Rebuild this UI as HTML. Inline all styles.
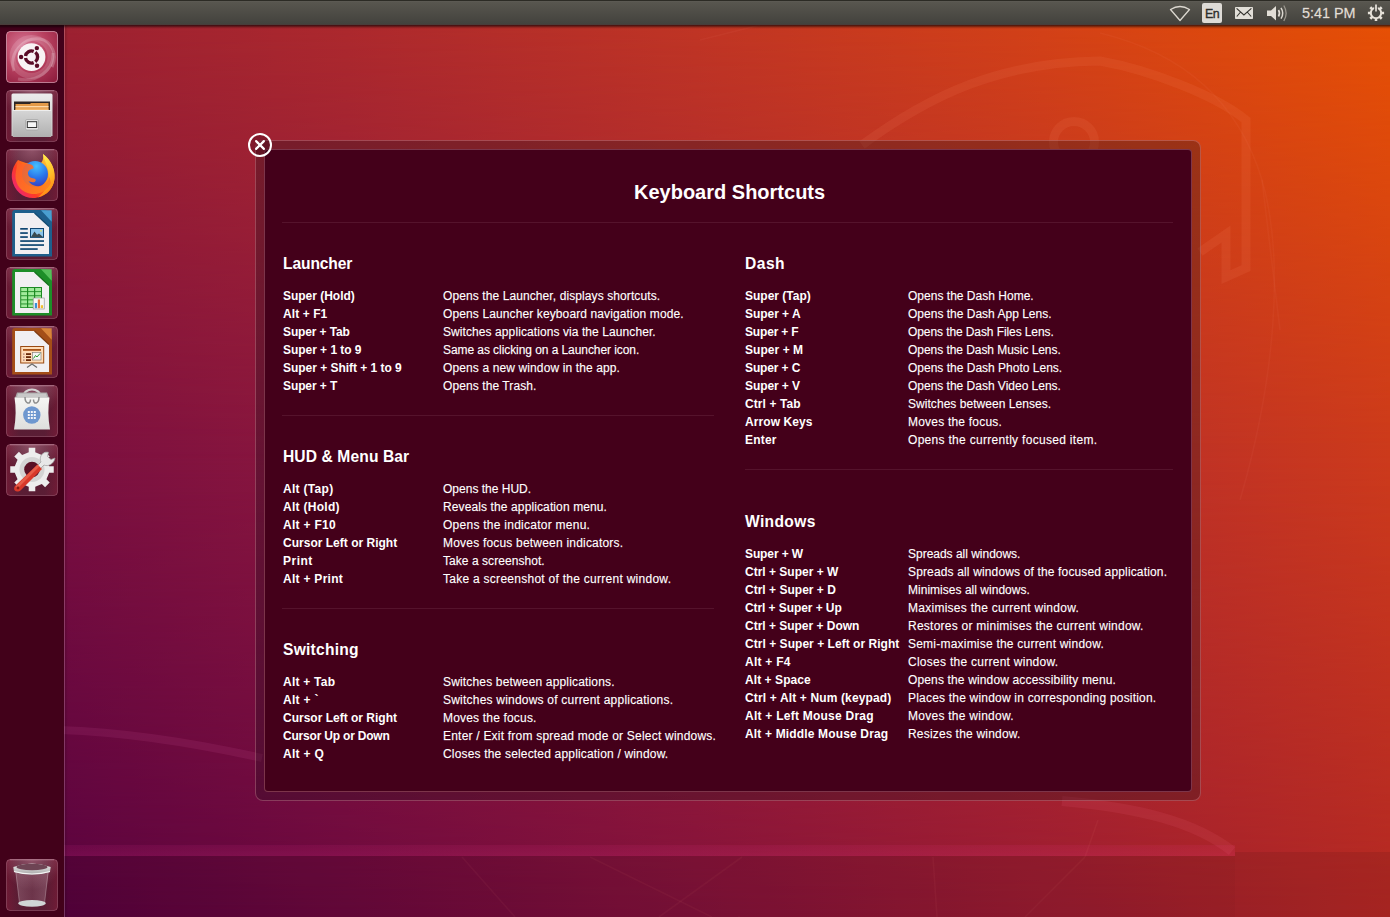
<!DOCTYPE html>
<html><head><meta charset="utf-8"><title>Keyboard Shortcuts</title>
<style>
html,body{margin:0;padding:0;width:1390px;height:917px;overflow:hidden;background:#7a1040}
body{position:relative;font-family:"Liberation Sans",sans-serif}
.abs{position:absolute}
#wpb{position:absolute;left:0;top:0;width:1390px;height:917px;background:linear-gradient(to right,#55013f 0%,#6d093f 25%,#84123b 50%,#9c1c32 75%,#b32824 100%)}
#wpm{position:absolute;left:0;top:0;width:1390px;height:917px;background:linear-gradient(to right,#770e40 0%,#8c173e 25%,#a22137 50%,#b72d2c 75%,#cc3a1c 100%);-webkit-mask-image:linear-gradient(to bottom,#000 50%,rgba(0,0,0,0) 100%);mask-image:linear-gradient(to bottom,#000 50%,rgba(0,0,0,0) 100%)}
#wpt{position:absolute;left:0;top:0;width:1390px;height:917px;background:linear-gradient(to right,#9b2031 0%,#ae2a2c 25%,#c13623 50%,#d44216 75%,#e75103 100%);-webkit-mask-image:linear-gradient(to bottom,#000 0%,rgba(0,0,0,0) 50%);mask-image:linear-gradient(to bottom,#000 0%,rgba(0,0,0,0) 50%)}
#band{position:absolute;left:64px;top:845px;width:1171px;height:11px;background:linear-gradient(to bottom,rgba(255,60,160,0.08),rgba(255,60,160,0.14))}
#below{position:absolute;left:64px;top:856px;width:1171px;height:61px;background:rgba(0,0,0,0.1)}
#below2{position:absolute;left:1235px;top:852px;width:155px;height:65px;background:rgba(0,0,0,0.08)}
#panel{position:absolute;left:0;top:0;width:1390px;height:25px;background:linear-gradient(to bottom,#2c2b25 0,#2c2b25 1px,#5f5d57 1px,#58564f 2px,#43423d 24px,#4a3c3a 24px)}
#pshadow{position:absolute;left:0;top:25px;width:1390px;height:4px;background:linear-gradient(to bottom,rgba(20,5,5,0.75),rgba(0,0,0,0.45) 30%,rgba(0,0,0,0.12) 70%,rgba(0,0,0,0))}
#launcher{position:absolute;left:0;top:25px;width:64px;height:892px;background:#42011a}
#ledge{position:absolute;left:64px;top:25px;width:1px;height:892px;background:rgba(255,255,255,0.2)}
#lshadow{position:absolute;left:65px;top:25px;width:3px;height:892px;background:linear-gradient(to right,rgba(0,0,0,0.15),rgba(0,0,0,0))}
.tile{position:absolute;left:6px;width:52px;height:52px;border-radius:3.5px;overflow:hidden}
.tile svg{position:absolute;left:0;top:0}
#frame{position:absolute;left:255px;top:140px;width:944px;height:659px;border:1px solid rgba(255,175,185,0.3);border-radius:8px;background:rgba(25,15,25,0.3)}
#inner{position:absolute;left:264px;top:149px;width:926px;height:641px;border:1px solid rgba(255,175,185,0.3);border-radius:4px;background:#44001a}
#close{position:absolute;left:248px;top:133px;width:20px;height:20px;border:2px solid #fff;border-radius:50%;background:rgba(40,0,20,0.25)}
.h,.k,.d,.t{position:absolute;white-space:nowrap;color:#fff}
.t{font-size:20px;line-height:20px;font-weight:bold}
.h{font-size:15.6px;line-height:15.6px;font-weight:bold}
.k{font-size:12px;line-height:12px;font-weight:bold}
.d{font-size:12px;line-height:12px;color:#fff;letter-spacing:0.1px;-webkit-text-stroke:0.25px rgba(255,255,255,0.6)}
.sep{position:absolute;height:1px;background:rgba(255,200,220,0.095)}
</style></head><body>
<div id="wpb"></div><div id="wpm"></div><div id="wpt"></div>

<svg class="abs" style="left:0;top:0" width="1390" height="917" viewBox="0 0 1390 917">
<g fill="none" stroke="rgba(255,150,110,0.11)" stroke-width="9" stroke-linejoin="miter">
<path d="M 862 145 C 930 95, 1000 62, 1100 61 C 1150 70, 1215 95, 1246 120 L 1246 268 L 1226 277 L 1226 234 L 1200 252"/>
<circle cx="1074" cy="142" r="20.5"/>
</g>
<g fill="none" stroke="rgba(255,120,200,0.09)" stroke-width="8">
<path d="M 60 730 C 120 732, 190 742, 262 758"/>
</g>
<g fill="none" stroke="rgba(255,120,150,0.1)" stroke-width="10">
<path d="M 1062 801 C 1140 808, 1195 822, 1232 851"/>
</g>
<g fill="none" stroke="rgba(255,160,140,0.06)" stroke-width="1.6">
<path d="M 1100 33 C 1170 50, 1235 90, 1262 180 C 1285 260, 1275 380, 1240 500"/>
<path d="M 1262 180 L 1280 330"/>
<path d="M 700 40 L 760 25"/>
<path d="M 462 857 L 515 917"/>
<path d="M 590 857 L 712 917"/>
<path d="M 740 917 L 738 917"/>
<path d="M 742 857 L 659 917"/>
<path d="M 933 857 L 937 917"/>
<path d="M 1085 857 L 1025 917"/>
<path d="M 1098 820 L 1085 857"/>
</g>
</svg>

<div id="band"></div><div id="below"></div><div id="below2"></div>
<div id="frame"></div>
<div id="inner"></div>
<div class="t" style="left:634px;top:182.07px">Keyboard Shortcuts</div>
<div class="sep" style="left:282px;top:222px;width:891px"></div>
<div class="h" style="left:283px;top:255.79px;letter-spacing:-0.11px">Launcher</div>
<div class="k" style="left:283px;top:289.84px;letter-spacing:-0.018px">Super (Hold)</div>
<div class="d" style="left:443px;top:289.84px;letter-spacing:0.095px">Opens the Launcher, displays shortcuts.</div>
<div class="k" style="left:283px;top:307.84px;letter-spacing:0.086px">Alt + F1</div>
<div class="d" style="left:443px;top:307.84px;letter-spacing:0.115px">Opens Launcher keyboard navigation mode.</div>
<div class="k" style="left:283px;top:325.84px;letter-spacing:-0.12px">Super + Tab</div>
<div class="d" style="left:443px;top:325.84px;letter-spacing:0.084px">Switches applications via the Launcher.</div>
<div class="k" style="left:283px;top:343.84px;letter-spacing:-0.038px">Super + 1 to 9</div>
<div class="d" style="left:443px;top:343.84px;letter-spacing:-0.071px">Same as clicking on a Launcher icon.</div>
<div class="k" style="left:283px;top:361.84px;letter-spacing:-0.029px">Super + Shift + 1 to 9</div>
<div class="d" style="left:443px;top:361.84px;letter-spacing:0.121px">Opens a new window in the app.</div>
<div class="k" style="left:283px;top:379.84px;letter-spacing:-0.1px">Super + T</div>
<div class="d" style="left:443px;top:379.84px;letter-spacing:0.086px">Opens the Trash.</div>
<div class="sep" style="left:282px;top:415px;width:432px"></div>
<div class="h" style="left:283px;top:448.79px;letter-spacing:0.11px">HUD &amp; Menu Bar</div>
<div class="k" style="left:283px;top:482.84px;letter-spacing:0.3px">Alt (Tap)</div>
<div class="d" style="left:443px;top:482.84px;letter-spacing:0.007px">Opens the HUD.</div>
<div class="k" style="left:283px;top:500.84px;letter-spacing:0.289px">Alt (Hold)</div>
<div class="d" style="left:443px;top:500.84px;letter-spacing:0.114px">Reveals the application menu.</div>
<div class="k" style="left:283px;top:518.84px;letter-spacing:0.3px">Alt + F10</div>
<div class="d" style="left:443px;top:518.84px;letter-spacing:0.258px">Opens the indicator menu.</div>
<div class="k" style="left:283px;top:536.84px;letter-spacing:0.011px">Cursor Left or Right</div>
<div class="d" style="left:443px;top:536.84px;letter-spacing:0.2px">Moves focus between indicators.</div>
<div class="k" style="left:283px;top:554.84px;letter-spacing:0.5px">Print</div>
<div class="d" style="left:443px;top:554.84px;letter-spacing:0.053px">Take a screenshot.</div>
<div class="k" style="left:283px;top:572.84px;letter-spacing:0.28px">Alt + Print</div>
<div class="d" style="left:443px;top:572.84px;letter-spacing:0.27px">Take a screenshot of the current window.</div>
<div class="sep" style="left:282px;top:608px;width:432px"></div>
<div class="h" style="left:283px;top:641.79px;letter-spacing:0.24px">Switching</div>
<div class="k" style="left:283px;top:675.84px;letter-spacing:0.237px">Alt + Tab</div>
<div class="d" style="left:443px;top:675.84px;letter-spacing:0.163px">Switches between applications.</div>
<div class="k" style="left:283px;top:693.84px;letter-spacing:0.3px">Alt + `</div>
<div class="d" style="left:443px;top:693.84px;letter-spacing:0.214px">Switches windows of current applications.</div>
<div class="k" style="left:283px;top:711.84px;letter-spacing:0.0px">Cursor Left or Right</div>
<div class="d" style="left:443px;top:711.84px;letter-spacing:0.18px">Moves the focus.</div>
<div class="k" style="left:283px;top:729.84px;letter-spacing:-0.2px">Cursor Up or Down</div>
<div class="d" style="left:443px;top:729.84px;letter-spacing:0.215px">Enter / Exit from spread mode or Select windows.</div>
<div class="k" style="left:283px;top:747.84px;letter-spacing:0.3px">Alt + Q</div>
<div class="d" style="left:443px;top:747.84px;letter-spacing:0.176px">Closes the selected application / window.</div>
<div class="h" style="left:745px;top:255.79px;letter-spacing:0.5px">Dash</div>
<div class="k" style="left:745px;top:289.84px;letter-spacing:0.0px">Super (Tap)</div>
<div class="d" style="left:908px;top:289.84px;letter-spacing:0.016px">Opens the Dash Home.</div>
<div class="k" style="left:745px;top:307.84px;letter-spacing:-0.037px">Super + A</div>
<div class="d" style="left:908px;top:307.84px;letter-spacing:0.005px">Opens the Dash App Lens.</div>
<div class="k" style="left:745px;top:325.84px;letter-spacing:-0.175px">Super + F</div>
<div class="d" style="left:908px;top:325.84px;letter-spacing:-0.092px">Opens the Dash Files Lens.</div>
<div class="k" style="left:745px;top:343.84px;letter-spacing:0.05px">Super + M</div>
<div class="d" style="left:908px;top:343.84px;letter-spacing:-0.052px">Opens the Dash Music Lens.</div>
<div class="k" style="left:745px;top:361.84px;letter-spacing:-0.125px">Super + C</div>
<div class="d" style="left:908px;top:361.84px;letter-spacing:0.004px">Opens the Dash Photo Lens.</div>
<div class="k" style="left:745px;top:379.84px;letter-spacing:-0.088px">Super + V</div>
<div class="d" style="left:908px;top:379.84px;letter-spacing:-0.012px">Opens the Dash Video Lens.</div>
<div class="k" style="left:745px;top:397.84px;letter-spacing:0.078px">Ctrl + Tab</div>
<div class="d" style="left:908px;top:397.84px;letter-spacing:0.048px">Switches between Lenses.</div>
<div class="k" style="left:745px;top:415.84px;letter-spacing:0.078px">Arrow Keys</div>
<div class="d" style="left:908px;top:415.84px;letter-spacing:0.206px">Moves the focus.</div>
<div class="k" style="left:745px;top:433.84px;letter-spacing:0.2px">Enter</div>
<div class="d" style="left:908px;top:433.84px;letter-spacing:0.3px">Opens the currently focused item.</div>
<div class="sep" style="left:745px;top:469px;width:428px"></div>
<div class="h" style="left:745px;top:513.79px;letter-spacing:0.35px">Windows</div>
<div class="k" style="left:745px;top:547.84px;letter-spacing:-0.112px">Super + W</div>
<div class="d" style="left:908px;top:547.84px;letter-spacing:-0.016px">Spreads all windows.</div>
<div class="k" style="left:745px;top:565.84px;letter-spacing:0.0px">Ctrl + Super + W</div>
<div class="d" style="left:908px;top:565.84px;letter-spacing:0.148px">Spreads all windows of the focused application.</div>
<div class="k" style="left:745px;top:583.84px;letter-spacing:0.013px">Ctrl + Super + D</div>
<div class="d" style="left:908px;top:583.84px;letter-spacing:0.024px">Minimises all windows.</div>
<div class="k" style="left:745px;top:601.84px;letter-spacing:-0.081px">Ctrl + Super + Up</div>
<div class="d" style="left:908px;top:601.84px;letter-spacing:0.264px">Maximises the current window.</div>
<div class="k" style="left:745px;top:619.84px;letter-spacing:-0.017px">Ctrl + Super + Down</div>
<div class="d" style="left:908px;top:619.84px;letter-spacing:0.25px">Restores or minimises the current window.</div>
<div class="k" style="left:745px;top:637.84px;letter-spacing:0.037px">Ctrl + Super + Left or Right</div>
<div class="d" style="left:908px;top:637.84px;letter-spacing:0.219px">Semi-maximise the current window.</div>
<div class="k" style="left:745px;top:655.84px;letter-spacing:0.243px">Alt + F4</div>
<div class="d" style="left:908px;top:655.84px;letter-spacing:0.268px">Closes the current window.</div>
<div class="k" style="left:745px;top:673.84px;letter-spacing:0.07px">Alt + Space</div>
<div class="d" style="left:908px;top:673.84px;letter-spacing:0.146px">Opens the window accessibility menu.</div>
<div class="k" style="left:745px;top:691.84px;letter-spacing:0.142px">Ctrl + Alt + Num (keypad)</div>
<div class="d" style="left:908px;top:691.84px;letter-spacing:0.203px">Places the window in corresponding position.</div>
<div class="k" style="left:745px;top:709.84px;letter-spacing:0.245px">Alt + Left Mouse Drag</div>
<div class="d" style="left:908px;top:709.84px;letter-spacing:0.262px">Moves the window.</div>
<div class="k" style="left:745px;top:727.84px;letter-spacing:0.159px">Alt + Middle Mouse Drag</div>
<div class="d" style="left:908px;top:727.84px;letter-spacing:0.2px">Resizes the window.</div>
<div id="close"><svg width="20" height="20" viewBox="0 0 20 20" style="position:absolute;left:0;top:0"><path d="M6.1 6.1 L13.9 13.9 M13.9 6.1 L6.1 13.9" stroke="#fff" stroke-width="2.2" stroke-linecap="round"/></svg></div>
<div id="launcher"></div><div id="ledge"></div><div id="lshadow"></div>
<div class="tile" style="top:31px"><svg width="52" height="52" viewBox="0 0 52 52"><defs><radialGradient id="pk" cx="0.35" cy="0.3" r="0.9"><stop offset="0" stop-color="#d77a98"/><stop offset="0.5" stop-color="#b8405f"/><stop offset="1" stop-color="#8e1d3e"/></radialGradient></defs><rect x="0.5" y="0.5" width="51" height="51" rx="3.5" fill="url(#pk)" stroke="rgba(255,210,225,0.55)"/><path d="M8 40 C 2 22, 18 6, 34 8 C 46 10, 52 24, 46 36" fill="none" stroke="rgba(255,255,255,0.22)" stroke-width="3"/><path d="M12 48 C 30 52, 48 40, 47 22" fill="none" stroke="rgba(255,255,255,0.18)" stroke-width="3"/>
<circle cx="25.5" cy="26" r="19" fill="none" stroke="rgba(255,235,240,0.16)" stroke-width="6"/>
<circle cx="25.5" cy="26.1" r="13.9" fill="#f8f2f4"/>
<path d="M27.69 31.69 A6.1 6.1 0 0 1 19.48 26.95 M19.48 25.05 A6.1 6.1 0 0 1 27.69 20.31 M29.34 21.26 A6.1 6.1 0 0 1 29.34 30.74" fill="none" stroke="#5a0b26" stroke-width="3.4"/>
<circle cx="30.86" cy="17.09" r="2.75" fill="#f8f2f4"/><circle cx="30.86" cy="17.09" r="2.2" fill="#5a0b26"/><circle cx="15.10" cy="26.00" r="2.75" fill="#f8f2f4"/><circle cx="15.10" cy="26.00" r="2.2" fill="#5a0b26"/><circle cx="31.01" cy="34.82" r="2.75" fill="#f8f2f4"/><circle cx="31.01" cy="34.82" r="2.2" fill="#5a0b26"/>
</svg></div>
<div class="tile" style="top:90px"><svg width="52" height="52" viewBox="0 0 52 52"><defs><linearGradient id="tb1" x1="0" y1="0" x2="0" y2="1"><stop offset="0" stop-color="rgba(255,220,230,0.16)"/><stop offset="0.3" stop-color="rgba(255,255,255,0.10)"/><stop offset="1" stop-color="rgba(255,220,235,0.13)"/></linearGradient><radialGradient id="tbr1" cx="0.5" cy="0" r="0.6"><stop offset="0" stop-color="rgba(255,190,210,0.3)"/><stop offset="1" stop-color="rgba(255,190,210,0)"/></radialGradient><linearGradient id="tbs1" x1="0" y1="0" x2="1" y2="0"><stop offset="0" stop-color="rgba(190,20,60,0.22)"/><stop offset="0.25" stop-color="rgba(190,20,60,0)"/><stop offset="0.75" stop-color="rgba(190,20,60,0)"/><stop offset="1" stop-color="rgba(190,20,60,0.22)"/></linearGradient></defs><rect x="0.5" y="0.5" width="51" height="51" rx="3.5" fill="url(#tb1)"/><rect x="0.5" y="0.5" width="51" height="51" rx="3.5" fill="url(#tbs1)"/><rect x="0.5" y="0.5" width="51" height="51" rx="3.5" fill="url(#tbr1)" stroke="rgba(255,205,220,0.24)"/><path d="M4 0.8 H48" stroke="rgba(255,210,225,0.35)" stroke-width="1"/>
<defs><linearGradient id="fg1" x1="0" y1="0" x2="0" y2="1"><stop offset="0" stop-color="#ececec"/><stop offset="1" stop-color="#c4c4c4"/></linearGradient>
<linearGradient id="fg2" x1="0" y1="0" x2="0" y2="1"><stop offset="0" stop-color="#d6d6d6"/><stop offset="1" stop-color="#b0b0b0"/></linearGradient></defs>
<path d="M7 3.5 H45 Q46.5 3.5 46.5 5 V46 H5.5 V5 Q5.5 3.5 7 3.5 Z" fill="url(#fg1)"/>
<rect x="8" y="11.5" width="36" height="9" fill="#2e2624"/>
<path d="M9.5 14 H24 L25 13 H42.5 V20 H9.5 Z" fill="#e39a48"/>
<rect x="9.5" y="16" width="33" height="1.3" fill="#ffd9a8"/>
<rect x="9.5" y="18.5" width="33" height="1.5" fill="#f2b46a"/>
<rect x="6.8" y="20" width="38.4" height="27" fill="url(#fg2)"/>
<rect x="6.8" y="20" width="38.4" height="1" fill="#eeeeee"/>
<rect x="19.5" y="29.5" width="13" height="10.5" rx="1.5" fill="#e2e2e2" stroke="#a0a0a0" stroke-width="0.7"/>
<rect x="21.3" y="31.7" width="9.4" height="5.8" fill="#f6f6f6" stroke="#333" stroke-width="1"/>
</svg></div>
<div class="tile" style="top:149px"><svg width="52" height="52" viewBox="0 0 52 52"><defs><linearGradient id="tb2" x1="0" y1="0" x2="0" y2="1"><stop offset="0" stop-color="rgba(255,220,230,0.16)"/><stop offset="0.3" stop-color="rgba(255,255,255,0.10)"/><stop offset="1" stop-color="rgba(255,220,235,0.13)"/></linearGradient><radialGradient id="tbr2" cx="0.5" cy="0" r="0.6"><stop offset="0" stop-color="rgba(255,190,210,0.3)"/><stop offset="1" stop-color="rgba(255,190,210,0)"/></radialGradient><linearGradient id="tbs2" x1="0" y1="0" x2="1" y2="0"><stop offset="0" stop-color="rgba(190,20,60,0.22)"/><stop offset="0.25" stop-color="rgba(190,20,60,0)"/><stop offset="0.75" stop-color="rgba(190,20,60,0)"/><stop offset="1" stop-color="rgba(190,20,60,0.22)"/></linearGradient></defs><rect x="0.5" y="0.5" width="51" height="51" rx="3.5" fill="url(#tb2)"/><rect x="0.5" y="0.5" width="51" height="51" rx="3.5" fill="url(#tbs2)"/><rect x="0.5" y="0.5" width="51" height="51" rx="3.5" fill="url(#tbr2)" stroke="rgba(255,205,220,0.24)"/><path d="M4 0.8 H48" stroke="rgba(255,210,225,0.35)" stroke-width="1"/>
<defs>
<radialGradient id="ffb" cx="0.55" cy="0.2" r="0.9"><stop offset="0" stop-color="#45c0ff"/><stop offset="0.5" stop-color="#2a74ea"/><stop offset="1" stop-color="#3b2fb4"/></radialGradient>
<linearGradient id="ffo" x1="0.1" y1="0.8" x2="0.9" y2="0.2"><stop offset="0" stop-color="#f0286a"/><stop offset="0.28" stop-color="#ff3b24"/><stop offset="0.6" stop-color="#ff8612"/><stop offset="1" stop-color="#ffc73a"/></linearGradient>
<linearGradient id="fft" x1="0" y1="0" x2="0.3" y2="1"><stop offset="0" stop-color="#fff75c"/><stop offset="0.6" stop-color="#ffc02a"/><stop offset="1" stop-color="#ff8a14"/></linearGradient>
<linearGradient id="ffh" x1="0" y1="0" x2="1" y2="1"><stop offset="0" stop-color="#ff5a2a"/><stop offset="1" stop-color="#ff8a1c"/></linearGradient>
</defs>
<path d="M12 11 C 7 17, 5 24, 6 30 C 8 42, 17 49, 27 49 C 39 49, 48 40, 48.5 29 C 49 19, 44 10, 37 5 C 37.5 9, 37 12, 35 14 L 20 14 C 17 13, 14 12, 12 11 Z" fill="url(#ffo)"/>
<circle cx="29" cy="25" r="13" fill="url(#ffb)"/>
<path d="M37 5 C 45 11, 49.5 20, 48.5 29.5 C 47.5 39, 41 46, 32 48.5 C 39 43, 43.5 35, 43 26 C 42.5 17, 38 12, 37 5 Z" fill="url(#fft)"/>
<path d="M12 11 L 14.5 15.5 C 17 14, 21 14, 25 15.5 C 27 16.5, 28 18, 27.5 19.5 C 24 20, 21.5 22, 22 25 C 22.5 28, 25 29, 28 29.5 C 30 30, 30.5 32, 28.5 33 C 26 33.5, 24 33, 22.5 32 C 25 36, 31 38.5, 36 37 C 40 35.5, 42.5 32, 43.5 28 L 45 34 C 41 42, 34 45.5, 26 45 C 16 44, 9 36, 9.5 26 C 10 20, 11.5 16, 12 11 Z" fill="url(#ffh)" opacity="0.9"/>
</svg></div>
<div class="tile" style="top:208px"><svg width="52" height="52" viewBox="0 0 52 52"><defs><linearGradient id="tb3" x1="0" y1="0" x2="0" y2="1"><stop offset="0" stop-color="rgba(255,220,230,0.16)"/><stop offset="0.3" stop-color="rgba(255,255,255,0.10)"/><stop offset="1" stop-color="rgba(255,220,235,0.13)"/></linearGradient><radialGradient id="tbr3" cx="0.5" cy="0" r="0.6"><stop offset="0" stop-color="rgba(255,190,210,0.3)"/><stop offset="1" stop-color="rgba(255,190,210,0)"/></radialGradient><linearGradient id="tbs3" x1="0" y1="0" x2="1" y2="0"><stop offset="0" stop-color="rgba(190,20,60,0.22)"/><stop offset="0.25" stop-color="rgba(190,20,60,0)"/><stop offset="0.75" stop-color="rgba(190,20,60,0)"/><stop offset="1" stop-color="rgba(190,20,60,0.22)"/></linearGradient></defs><rect x="0.5" y="0.5" width="51" height="51" rx="3.5" fill="url(#tb3)"/><rect x="0.5" y="0.5" width="51" height="51" rx="3.5" fill="url(#tbs3)"/><rect x="0.5" y="0.5" width="51" height="51" rx="3.5" fill="url(#tbr3)" stroke="rgba(255,205,220,0.24)"/><path d="M4 0.8 H48" stroke="rgba(255,210,225,0.35)" stroke-width="1"/><defs><linearGradient id="docg" x1="0" y1="0" x2="0" y2="1"><stop offset="0" stop-color="rgba(255,255,255,0.3)"/><stop offset="1" stop-color="rgba(200,200,210,0.25)"/></linearGradient></defs>
<path d="M9 2 H40 L46 8 V48.5 H6.2 V5 Q6.2 2 9 2 Z" fill="#1e5f8c"/>
<path d="M35 2.3 H45.7 V13.8 Z" fill="#4a9fd0"/>
<path d="M9 5 H28.5 L43 18.5 V46 H9 Z" fill="#f1eff2"/>
<path d="M28.5 5 L43 18.5" stroke="#134a70" stroke-width="1.2"/>

<rect x="14.2" y="20" width="7.6" height="1.7" fill="#0f4672"/>
<rect x="14.2" y="24.2" width="7.6" height="1.7" fill="#0f4672"/>
<rect x="14.2" y="28.2" width="7.6" height="1.7" fill="#0f4672"/>
<rect x="14.2" y="32.2" width="23.8" height="1.7" fill="#0f4672"/>
<rect x="14.2" y="36.2" width="23.8" height="1.7" fill="#0f4672"/>
<rect x="14.2" y="40.2" width="17.5" height="1.7" fill="#0f4672"/>
<rect x="24" y="20" width="14" height="9.9" fill="#0f4672"/>
<rect x="25" y="21" width="12" height="7.9" fill="#8cc4ea"/>
<path d="M25 28.9 L28.5 23.5 L31 26.8 L33 25.5 L37 28.9 Z" fill="#3a4a50"/>
<circle cx="35" cy="22.8" r="0.9" fill="#e8e060"/>
</svg></div>
<div class="tile" style="top:267px"><svg width="52" height="52" viewBox="0 0 52 52"><defs><linearGradient id="tb4" x1="0" y1="0" x2="0" y2="1"><stop offset="0" stop-color="rgba(255,220,230,0.16)"/><stop offset="0.3" stop-color="rgba(255,255,255,0.10)"/><stop offset="1" stop-color="rgba(255,220,235,0.13)"/></linearGradient><radialGradient id="tbr4" cx="0.5" cy="0" r="0.6"><stop offset="0" stop-color="rgba(255,190,210,0.3)"/><stop offset="1" stop-color="rgba(255,190,210,0)"/></radialGradient><linearGradient id="tbs4" x1="0" y1="0" x2="1" y2="0"><stop offset="0" stop-color="rgba(190,20,60,0.22)"/><stop offset="0.25" stop-color="rgba(190,20,60,0)"/><stop offset="0.75" stop-color="rgba(190,20,60,0)"/><stop offset="1" stop-color="rgba(190,20,60,0.22)"/></linearGradient></defs><rect x="0.5" y="0.5" width="51" height="51" rx="3.5" fill="url(#tb4)"/><rect x="0.5" y="0.5" width="51" height="51" rx="3.5" fill="url(#tbs4)"/><rect x="0.5" y="0.5" width="51" height="51" rx="3.5" fill="url(#tbr4)" stroke="rgba(255,205,220,0.24)"/><path d="M4 0.8 H48" stroke="rgba(255,210,225,0.35)" stroke-width="1"/><defs><linearGradient id="docg" x1="0" y1="0" x2="0" y2="1"><stop offset="0" stop-color="rgba(255,255,255,0.3)"/><stop offset="1" stop-color="rgba(200,200,210,0.25)"/></linearGradient></defs>
<path d="M9 2 H40 L46 8 V48.5 H6.2 V5 Q6.2 2 9 2 Z" fill="#1d8e28"/>
<path d="M35 2.3 H45.7 V13.8 Z" fill="#56bf5a"/>
<path d="M9 5 H28.5 L43 18.5 V46 H9 Z" fill="#f1eff2"/>
<path d="M28.5 5 L43 18.5" stroke="#14701c" stroke-width="1.2"/>

<rect x="14.2" y="20" width="21.8" height="21" fill="#1b8a22"/>
<g fill="#a2ea9c">
<rect x="15.2" y="21" width="5.8" height="3.2"/><rect x="22.2" y="21" width="5.8" height="3.2"/><rect x="29.2" y="21" width="5.8" height="3.2"/>
<rect x="15.2" y="25.1" width="5.8" height="3.2"/><rect x="22.2" y="25.1" width="5.8" height="3.2"/><rect x="29.2" y="25.1" width="5.8" height="3.2"/>
<rect x="15.2" y="29.2" width="5.8" height="3.2"/><rect x="22.2" y="29.2" width="5.8" height="3.2"/><rect x="29.2" y="29.2" width="5.8" height="3.2"/>
<rect x="15.2" y="33.3" width="5.8" height="3.2"/><rect x="22.2" y="33.3" width="5.8" height="3.2"/>
<rect x="15.2" y="37.4" width="5.8" height="2.8"/><rect x="22.2" y="37.4" width="5.8" height="2.8"/>
</g>
<rect x="27.2" y="31" width="11" height="11" fill="#f6f6f6" stroke="#8a8a8a" stroke-width="0.6"/>
<rect x="28.8" y="36" width="2.2" height="5.2" fill="#3a8fd8"/>
<rect x="31.8" y="32.5" width="2.2" height="8.7" fill="#e8783a"/>
<rect x="34.8" y="38.2" width="2.2" height="3" fill="#f0c030"/>
</svg></div>
<div class="tile" style="top:326px"><svg width="52" height="52" viewBox="0 0 52 52"><defs><linearGradient id="tb5" x1="0" y1="0" x2="0" y2="1"><stop offset="0" stop-color="rgba(255,220,230,0.16)"/><stop offset="0.3" stop-color="rgba(255,255,255,0.10)"/><stop offset="1" stop-color="rgba(255,220,235,0.13)"/></linearGradient><radialGradient id="tbr5" cx="0.5" cy="0" r="0.6"><stop offset="0" stop-color="rgba(255,190,210,0.3)"/><stop offset="1" stop-color="rgba(255,190,210,0)"/></radialGradient><linearGradient id="tbs5" x1="0" y1="0" x2="1" y2="0"><stop offset="0" stop-color="rgba(190,20,60,0.22)"/><stop offset="0.25" stop-color="rgba(190,20,60,0)"/><stop offset="0.75" stop-color="rgba(190,20,60,0)"/><stop offset="1" stop-color="rgba(190,20,60,0.22)"/></linearGradient></defs><rect x="0.5" y="0.5" width="51" height="51" rx="3.5" fill="url(#tb5)"/><rect x="0.5" y="0.5" width="51" height="51" rx="3.5" fill="url(#tbs5)"/><rect x="0.5" y="0.5" width="51" height="51" rx="3.5" fill="url(#tbr5)" stroke="rgba(255,205,220,0.24)"/><path d="M4 0.8 H48" stroke="rgba(255,210,225,0.35)" stroke-width="1"/><defs><linearGradient id="docg" x1="0" y1="0" x2="0" y2="1"><stop offset="0" stop-color="rgba(255,255,255,0.3)"/><stop offset="1" stop-color="rgba(200,200,210,0.25)"/></linearGradient></defs>
<path d="M9 2 H40 L46 8 V48.5 H6.2 V5 Q6.2 2 9 2 Z" fill="#a44e18"/>
<path d="M35 2.3 H45.7 V13.8 Z" fill="#d8843a"/>
<path d="M9 5 H28.5 L43 18.5 V46 H9 Z" fill="#f1eff2"/>
<path d="M28.5 5 L43 18.5" stroke="#7e3a10" stroke-width="1.2"/>

<rect x="14.2" y="20" width="24" height="17.5" fill="#9a4a12"/>
<rect x="15.2" y="21" width="22" height="15.5" fill="#ffdcb8"/>
<rect x="17" y="23" width="18" height="1.8" fill="#a85418"/>
<rect x="17" y="27.4" width="1.6" height="1.4" fill="#b08a80"/><rect x="17" y="30.4" width="1.6" height="1.4" fill="#b08a80"/><rect x="17" y="33.4" width="1.6" height="1.4" fill="#b08a80"/>
<rect x="20" y="27.2" width="5" height="1.8" fill="#6a2a08"/><rect x="20" y="30.2" width="5" height="1.8" fill="#6a2a08"/><rect x="20" y="33.2" width="5" height="1.8" fill="#6a2a08"/>
<rect x="26.5" y="26.5" width="8.5" height="7.5" fill="#f4f4f4" stroke="#777" stroke-width="0.6"/>
<path d="M27.5 32.5 L29.5 29.5 L31 31 L34 27.5" fill="none" stroke="#2a9a2a" stroke-width="1"/>
<path d="M21 41.5 L26 38 L31 41.5" fill="none" stroke="#6a6a6a" stroke-width="1.2"/>
</svg></div>
<div class="tile" style="top:385px"><svg width="52" height="52" viewBox="0 0 52 52"><defs><linearGradient id="tb6" x1="0" y1="0" x2="0" y2="1"><stop offset="0" stop-color="rgba(255,220,230,0.16)"/><stop offset="0.3" stop-color="rgba(255,255,255,0.10)"/><stop offset="1" stop-color="rgba(255,220,235,0.13)"/></linearGradient><radialGradient id="tbr6" cx="0.5" cy="0" r="0.6"><stop offset="0" stop-color="rgba(255,190,210,0.3)"/><stop offset="1" stop-color="rgba(255,190,210,0)"/></radialGradient><linearGradient id="tbs6" x1="0" y1="0" x2="1" y2="0"><stop offset="0" stop-color="rgba(190,20,60,0.22)"/><stop offset="0.25" stop-color="rgba(190,20,60,0)"/><stop offset="0.75" stop-color="rgba(190,20,60,0)"/><stop offset="1" stop-color="rgba(190,20,60,0.22)"/></linearGradient></defs><rect x="0.5" y="0.5" width="51" height="51" rx="3.5" fill="url(#tb6)"/><rect x="0.5" y="0.5" width="51" height="51" rx="3.5" fill="url(#tbs6)"/><rect x="0.5" y="0.5" width="51" height="51" rx="3.5" fill="url(#tbr6)" stroke="rgba(255,205,220,0.24)"/><path d="M4 0.8 H48" stroke="rgba(255,210,225,0.35)" stroke-width="1"/>
<defs><linearGradient id="bagg" x1="0" y1="0" x2="0" y2="1"><stop offset="0" stop-color="#f6f6f4"/><stop offset="1" stop-color="#dededc"/></linearGradient></defs>
<path d="M17.5 12 C 17.5 2, 34.5 2, 34.5 12" fill="none" stroke="#d4d4d4" stroke-width="2.2"/>
<path d="M11 7.5 H41 L43 13 H9 Z" fill="#a8a8a8"/>
<path d="M12 8.5 H40 L41 12 H11 Z" fill="#c8c8c8"/>
<path d="M8.5 12.5 H43.5 Q 41 28, 44 44.5 H8 Q 11 28, 8.5 12.5 Z" fill="url(#bagg)"/>
<path d="M19 12 C 19 19, 24.5 20, 24.5 14.5 M27.5 14.5 C 27.5 20, 33 19, 33 12" fill="none" stroke="#8e8e8e" stroke-width="1.5"/>
<circle cx="25.8" cy="30" r="8.7" fill="#6e97cf"/>
<g fill="#f4f6fa">
<rect x="21.8" y="26" width="2" height="2"/><rect x="24.8" y="26" width="2" height="2"/><rect x="27.8" y="26" width="2" height="2"/>
<rect x="21.8" y="29" width="2" height="2"/><rect x="24.8" y="29" width="2" height="2"/><rect x="27.8" y="29" width="2" height="2"/>
<rect x="21.8" y="32" width="2" height="2"/><rect x="24.8" y="32" width="2" height="2"/><rect x="27.8" y="32" width="2" height="2"/>
</g>
</svg></div>
<div class="tile" style="top:444px"><svg width="52" height="52" viewBox="0 0 52 52"><defs><linearGradient id="tb7" x1="0" y1="0" x2="0" y2="1"><stop offset="0" stop-color="rgba(255,220,230,0.16)"/><stop offset="0.3" stop-color="rgba(255,255,255,0.10)"/><stop offset="1" stop-color="rgba(255,220,235,0.13)"/></linearGradient><radialGradient id="tbr7" cx="0.5" cy="0" r="0.6"><stop offset="0" stop-color="rgba(255,190,210,0.3)"/><stop offset="1" stop-color="rgba(255,190,210,0)"/></radialGradient><linearGradient id="tbs7" x1="0" y1="0" x2="1" y2="0"><stop offset="0" stop-color="rgba(190,20,60,0.22)"/><stop offset="0.25" stop-color="rgba(190,20,60,0)"/><stop offset="0.75" stop-color="rgba(190,20,60,0)"/><stop offset="1" stop-color="rgba(190,20,60,0.22)"/></linearGradient></defs><rect x="0.5" y="0.5" width="51" height="51" rx="3.5" fill="url(#tb7)"/><rect x="0.5" y="0.5" width="51" height="51" rx="3.5" fill="url(#tbs7)"/><rect x="0.5" y="0.5" width="51" height="51" rx="3.5" fill="url(#tbr7)" stroke="rgba(255,205,220,0.24)"/><path d="M4 0.8 H48" stroke="rgba(255,210,225,0.35)" stroke-width="1"/>
<path d="M43.19 22.24 L47.75 22.21 L47.75 28.79 L43.19 28.76 L40.46 35.35 L43.71 38.56 L39.06 43.21 L35.85 39.96 L29.26 42.69 L29.29 47.25 L22.71 47.25 L22.74 42.69 L16.15 39.96 L12.94 43.21 L8.29 38.56 L11.54 35.35 L8.81 28.76 L4.25 28.79 L4.25 22.21 L8.81 22.24 L11.54 15.65 L8.29 12.44 L12.94 7.79 L16.15 11.04 L22.74 8.31 L22.71 3.75 L29.29 3.75 L29.26 8.31 L35.85 11.04 L39.06 7.79 L43.71 12.44 L40.46 15.65 Z" fill="#ededed"/>
<circle cx="26" cy="25.5" r="12.5" fill="#d4d4d4"/>
<circle cx="26" cy="25.5" r="7.8" fill="#5a1025"/>
<path d="M41 8 C 35 8.5, 33 14, 35 18 L 31 22 L 34 25 L 38 21 C 42 23, 48 20, 49 14 L 45 15.5 L 41.5 12.5 L 42.5 8.3 Z" fill="#e8e8e8" stroke="#9a9a9a" stroke-width="0.7"/>
<path d="M31.5 20.5 L 36 25 L 15 46 C 13 48, 10 48, 8.8 46.6 C 7.5 45, 8 42.5, 10 41 Z" fill="#d8382a"/>
<path d="M31.5 20.5 L 33.5 22.5 L 11.5 44.5 L 9.5 42.5 Z" fill="#f47a60" opacity="0.55"/>
<circle cx="12" cy="44" r="1.4" fill="#8a1a12"/>
</svg></div>
<div class="tile" style="top:859px"><svg width="52" height="52" viewBox="0 0 52 52"><defs><linearGradient id="tbt" x1="0" y1="0" x2="0" y2="1"><stop offset="0" stop-color="rgba(255,220,230,0.16)"/><stop offset="0.3" stop-color="rgba(255,255,255,0.10)"/><stop offset="1" stop-color="rgba(255,220,235,0.13)"/></linearGradient><radialGradient id="tbrt" cx="0.5" cy="0" r="0.6"><stop offset="0" stop-color="rgba(255,190,210,0.3)"/><stop offset="1" stop-color="rgba(255,190,210,0)"/></radialGradient><linearGradient id="tbst" x1="0" y1="0" x2="1" y2="0"><stop offset="0" stop-color="rgba(190,20,60,0.22)"/><stop offset="0.25" stop-color="rgba(190,20,60,0)"/><stop offset="0.75" stop-color="rgba(190,20,60,0)"/><stop offset="1" stop-color="rgba(190,20,60,0.22)"/></linearGradient></defs><rect x="0.5" y="0.5" width="51" height="51" rx="3.5" fill="url(#tbt)"/><rect x="0.5" y="0.5" width="51" height="51" rx="3.5" fill="url(#tbst)"/><rect x="0.5" y="0.5" width="51" height="51" rx="3.5" fill="url(#tbrt)" stroke="rgba(255,205,220,0.24)"/><path d="M4 0.8 H48" stroke="rgba(255,210,225,0.35)" stroke-width="1"/>
<defs><linearGradient id="trg" x1="0" y1="0" x2="1" y2="0"><stop offset="0" stop-color="rgba(255,225,235,0.22)"/><stop offset="0.5" stop-color="rgba(255,225,235,0.12)"/><stop offset="1" stop-color="rgba(255,225,235,0.22)"/></linearGradient>
<linearGradient id="trr" x1="0" y1="0" x2="0" y2="1"><stop offset="0" stop-color="#f0f0f0"/><stop offset="1" stop-color="#a8a8a8"/></linearGradient></defs>
<path d="M9 9 H43 L38.5 44.5 H13.5 Z" fill="url(#trg)"/>
<path d="M9.5 10 L13.5 44.5 M42.5 10 L38.5 44.5" stroke="rgba(255,255,255,0.3)" stroke-width="0.8"/>
<ellipse cx="26" cy="44.3" rx="13.8" ry="3.4" fill="#d0d6d6"/>
<path d="M7.3 8 Q 26 1, 44.7 8 L 44 13 Q 26 18, 8 13 Z" fill="url(#trr)"/>
<ellipse cx="26" cy="8" rx="15.5" ry="3.2" fill="#6e4454"/>
<path d="M8 12.5 Q 26 17.5, 44 12.5" fill="none" stroke="#f4f4f4" stroke-width="1.2"/>
</svg></div>
<div id="pshadow"></div>
<div id="panel"></div>

<svg class="abs" style="left:1168px;top:5px" width="24" height="18" viewBox="0 0 24 18">
<path d="M2.5 4.5 Q 12 -1.5 21.5 4.5 L 12 15.5 Z" fill="none" stroke="#dcd8d0" stroke-width="1.3" stroke-linejoin="round"/>
</svg>
<div class="abs" style="left:1202px;top:3px;width:20px;height:20px;border-radius:2px;background:#dedbd6"></div>
<div class="abs" style="left:1202px;top:4px;width:20px;height:20px;font-size:12.4px;line-height:20px;text-align:center;color:#2e2e2a;letter-spacing:-0.7px;-webkit-text-stroke:0.35px #2e2e2a;font-family:'Liberation Sans',sans-serif">En</div>
<svg class="abs" style="left:1234px;top:6px" width="20" height="14" viewBox="0 0 20 14">
<rect x="1" y="1" width="18" height="12" rx="0.8" fill="#e2dfd8"/>
<path d="M2.6 2.3 L 9.9 9 L 17.4 2.3 M 6.6 6 L 2.8 10.5 M 13.2 6 L 17.2 10.5" fill="none" stroke="#34332e" stroke-width="1.1"/>
</svg>
<svg class="abs" style="left:1266px;top:4px" width="22" height="19" viewBox="0 0 22 19">
<path d="M1 6.5 H5 L10 2 V16.5 L5 12 H1 Z" fill="#e2ded6"/>
<path d="M12.5 6 Q 14.5 9.2 12.5 12.5" fill="none" stroke="#e2ded6" stroke-width="1.6"/>
<path d="M15 3.8 Q 18.5 9.2 15 14.7" fill="none" stroke="#dcd8d0" stroke-width="1.5"/>
<path d="M17.8 1.5 Q 22.5 9.2 17.8 17" fill="none" stroke="#9a968e" stroke-width="1.3"/>
</svg>
<div class="abs" style="left:1302px;top:4px;font-size:14.4px;line-height:18px;color:#e2ded6;-webkit-text-stroke:0.3px rgba(226,222,214,0.7);font-family:'Liberation Sans',sans-serif;white-space:nowrap">5:41 PM</div>
<svg class="abs" style="left:1366px;top:4px" width="20" height="18" viewBox="0 0 20 18">
<path d="M16.08 7.77 L18.10 7.69 L18.10 10.31 L16.08 10.23 L15.17 12.43 L16.65 13.80 L14.80 15.65 L13.43 14.17 L11.23 15.08 L11.31 17.10 L8.69 17.10 L8.77 15.08 L6.57 14.17 L5.20 15.65 L3.35 13.80 L4.83 12.43 L3.92 10.23 L1.90 10.31 L1.90 7.69 L3.92 7.77 L4.83 5.57 L3.35 4.20 L5.20 2.35 L6.57 3.83 L8.77 2.92 L8.69 0.90 L11.31 0.90 L11.23 2.92 L13.43 3.83 L14.80 2.35 L16.65 4.20 L15.17 5.57 Z" fill="#e6e2da"/>
<circle cx="10" cy="9" r="4.2" fill="#4a4944"/>
<rect x="9.1" y="0.5" width="1.8" height="7" fill="#e6e2da"/>
<rect x="8.2" y="1" width="0.9" height="7" fill="#4a4944"/><rect x="10.9" y="1" width="0.9" height="7" fill="#4a4944"/>
</svg>

</body></html>
